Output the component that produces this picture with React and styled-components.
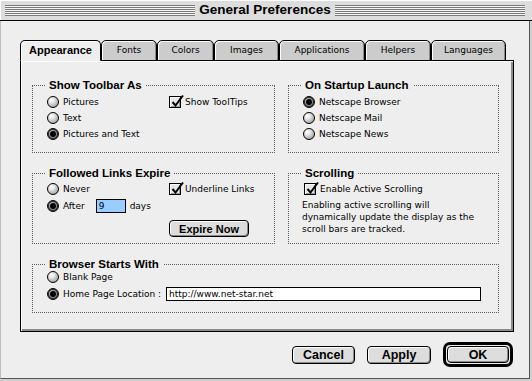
import React from "react";
import styled, { createGlobalStyle, css } from "styled-components";

const GlobalStyle = createGlobalStyle`
  html, body { margin: 0; padding: 0; background: #ffffff; }
  * { box-sizing: border-box; }
`;

const Window = styled.div`
  width: 532px;
  height: 381px;
  display: flex;
  flex-direction: column;
  background: #cfcfcf;
  font-family: "DejaVu Sans", sans-serif;
  font-size: 9px;
  color: #000;
`;

const TitleBar = styled.div`
  flex: none;
  height: 21px;
  display: flex;
  align-items: center;
  gap: 4px;
  padding: 0 7px 0 5px;
  background: #dddddd;
  border-bottom: 1px solid #000;
  box-shadow: inset 1px 1px 0 #fff;
`;

const Stripes = styled.div`
  flex: 1;
  height: 11px;
  background: repeating-linear-gradient(to bottom, #7b7b7b 0 1px, #f4f4f4 1px 2px);
`;

const Title = styled.div`
  font-family: "Liberation Sans", Arial, sans-serif;
  font-weight: 700;
  font-size: 13.5px;
  line-height: 16px;
  white-space: nowrap;
`;

const Content = styled.div`
  flex: 1;
  margin: 0 2px 2px 0;
  background: #eeeeee;
  border-left: 1px solid #bdbdbd;
  border-right: 1px solid #555;
  border-bottom: 1px solid #555;
  padding: 19px 0 0 19px;
  display: flex;
  flex-direction: column;
`;

const TabRow = styled.div`
  display: flex;
  height: 21px;
  margin-bottom: -1px;
`;

const Tab = styled.div`
  position: relative;
  z-index: ${(p) => (p.$active ? 2 : 0)};
  width: ${(p) => p.$w}px;
  height: 21px;
  display: flex;
  align-items: center;
  justify-content: center;
  padding-bottom: 1px;
  border: 1px solid #000;
  border-bottom-color: ${(p) => (p.$active ? "#eeeeee" : "#000")};
  border-radius: 5px 5px 0 0;
  background: ${(p) => (p.$active ? "#eeeeee" : "#cccccc")};
  box-shadow: inset 1px 1px 0 #fff, inset -1px 0 0 #8a8a8a;
  white-space: nowrap;
  ${(p) =>
    p.$active &&
    css`
      font-family: "Liberation Sans", Arial, sans-serif;
      font-weight: 700;
      font-size: 11px;
      box-shadow: inset 1px 1px 0 #fff;
    `}
`;

const Panel = styled.div`
  width: 494px;
  height: 272px;
  border: 1px solid #000;
  background: #eeeeee;
  box-shadow: inset 1px 1px 0 #fff, inset -2px -2px 0 #8c8c8c;
  padding: 24px 0 0 11px;
  display: grid;
  grid-template-columns: 243px 211px;
  grid-template-rows: 68px 71px 49px;
  column-gap: 13px;
  row-gap: 20px;
  align-content: start;
`;

const Group = styled.div`
  position: relative;
  border: 1px dotted #5a5a5a;
  padding-top: ${(p) => p.$top}px;
  padding-left: ${(p) => p.$left || 14}px;
  grid-column: ${(p) => (p.$wide ? "1 / -1" : "auto")};
  display: flex;
`;

const GroupTitle = styled.div`
  position: absolute;
  top: -8px;
  left: 12px;
  padding: 0 4px;
  background: #eeeeee;
  font-family: "Liberation Sans", Arial, sans-serif;
  font-weight: 700;
  font-size: 11.5px;
  line-height: 14px;
  white-space: nowrap;
`;

const Stack = styled.div`
  display: flex;
  flex-direction: column;
  align-items: flex-start;
  gap: ${(p) => p.$gap || 0}px;
  width: ${(p) => (p.$w ? `${p.$w}px` : "auto")};
  flex: none;
`;

const Row = styled.div`
  display: flex;
  align-items: center;
  gap: 4px;
  height: 16px;
  white-space: nowrap;
  padding-left: ${(p) => p.$indent || 0}px;
`;

const RadioDot = styled.span`
  position: relative;
  flex: none;
  width: 12px;
  height: 12px;
  border-radius: 50%;
  border: 1px solid #000;
  background: radial-gradient(circle at 35% 30%, #ffffff 0, #ececec 25%, #aaaaaa 75%, #6c6c6c 100%);
  ${(p) =>
    p.$on &&
    css`
      box-shadow: inset 0 0 0 1px #222;
      background: radial-gradient(circle at 35% 30%, #cfcfcf, #5a5a5a);
      &::after {
        content: "";
        position: absolute;
        left: 2px;
        top: 2px;
        width: 6px;
        height: 6px;
        border-radius: 50%;
        background: #000;
      }
    `}
`;

const Box = styled.span`
  position: relative;
  flex: none;
  width: 12px;
  height: 12px;
  border: 1px solid #000;
  background: #e6e6e6;
  box-shadow: inset 1px 1px 0 #fff, inset -1px -1px 0 #9a9a9a;
`;

const Tick = styled.svg`
  position: absolute;
  left: 0;
  top: -3px;
  width: 14px;
  height: 14px;
  overflow: visible;
`;

const Field = styled.input`
  flex: none;
  width: ${(p) => p.$w}px;
  height: 14px;
  margin-left: ${(p) => p.$ml || 0}px;
  padding: 0 2px;
  border: 1px solid #000;
  border-radius: 0;
  outline: none;
  background: ${(p) => (p.$selected ? "#99ccff" : "#ffffff")};
  font-family: "DejaVu Sans", sans-serif;
  font-size: 9px;
  color: #000;
`;

const Label = styled.span`
  flex: none;
  width: ${(p) => (p.$w ? `${p.$w}px` : "auto")};
`;

const Note = styled.p`
  margin: 2px 0 0;
  line-height: 12px;
  white-space: nowrap;
`;

const Button = styled.button`
  flex: none;
  width: ${(p) => p.$w}px;
  height: ${(p) => p.$h || 18}px;
  margin-top: ${(p) => p.$mt || 0}px;
  padding: 0;
  border: 1px solid #000;
  border-radius: 4px;
  background: #dddddd;
  box-shadow: inset 1px 1px 0 #fff, inset -1px -1px 0 #8a8a8a;
  font-family: "Liberation Sans", Arial, sans-serif;
  font-weight: 700;
  font-size: ${(p) => p.$size || 12.5}px;
  color: #000;
`;

const DefaultRing = styled.span`
  display: inline-flex;
  padding: 1px;
  border: 3px solid #000;
  border-radius: 7px;
  background: #eeeeee;
`;

const Footer = styled.div`
  width: 494px;
  display: flex;
  justify-content: flex-end;
  align-items: center;
  gap: 12px;
  margin-top: 10px;
  padding-right: 1px;
`;

const Radio = ({ on, children }) => (
  <Row>
    <RadioDot $on={on} />
    <span>{children}</span>
  </Row>
);

const Checkbox = ({ children, indent }) => (
  <Row $indent={indent}>
    <Box>
      <Tick viewBox="0 0 14 14">
        <path d="M2.5 8 L5.5 11.5 L13 1.5" fill="none" stroke="#000" strokeWidth="2" />
      </Tick>
    </Box>
    <span>{children}</span>
  </Row>
);

const tabs = [
  ["Appearance", 81],
  ["Fonts", 56],
  ["Colors", 57],
  ["Images", 65],
  ["Applications", 86],
  ["Helpers", 66],
  ["Languages", 75],
];

export default function App() {
  return (
    <Window>
      <GlobalStyle />
      <TitleBar>
        <Stripes />
        <Title>General Preferences</Title>
        <Stripes />
      </TitleBar>
      <Content>
        <TabRow>
          {tabs.map(([name, w], i) => (
            <Tab key={name} $w={w} $active={i === 0}>
              {name}
            </Tab>
          ))}
        </TabRow>
        <Panel>
          <Group $top={8}>
            <GroupTitle>Show Toolbar As</GroupTitle>
            <Stack $w={122}>
              <Radio>Pictures</Radio>
              <Radio>Text</Radio>
              <Radio on>Pictures and Text</Radio>
            </Stack>
            <Stack>
              <Checkbox>Show ToolTips</Checkbox>
            </Stack>
          </Group>

          <Group $top={8}>
            <GroupTitle>On Startup Launch</GroupTitle>
            <Stack>
              <Radio on>Netscape Browser</Radio>
              <Radio>Netscape Mail</Radio>
              <Radio>Netscape News</Radio>
            </Stack>
          </Group>

          <Group $top={7}>
            <GroupTitle>Followed Links Expire</GroupTitle>
            <Stack $w={122} $gap={1}>
              <Radio>Never</Radio>
              <Row>
                <RadioDot $on />
                <span>After</span>
                <Field $w={30} $ml={7} $selected readOnly value="9" />
                <span>days</span>
              </Row>
            </Stack>
            <Stack>
              <Checkbox>Underline Links</Checkbox>
              <Button $w={80} $h={17} $mt={23} $size={11}>
                Expire Now
              </Button>
            </Stack>
          </Group>

          <Group $top={7} $left={13}>
            <GroupTitle>Scrolling</GroupTitle>
            <Stack>
              <Checkbox indent={2}>Enable Active Scrolling</Checkbox>
              <Note>
                Enabling active scrolling will
                <br />
                dynamically update the display as the
                <br />
                scroll bars are tracked.
              </Note>
            </Stack>
          </Group>

          <Group $top={4} $wide>
            <GroupTitle>Browser Starts With</GroupTitle>
            <Stack $gap={1}>
              <Radio>Blank Page</Radio>
              <Row>
                <RadioDot $on />
                <Label $w={99}>Home Page Location :</Label>
                <Field $w={315} readOnly value="http://www.net-star.net" />
              </Row>
            </Stack>
          </Group>
        </Panel>
        <Footer>
          <Button $w={63}>Cancel</Button>
          <Button $w={64}>Apply</Button>
          <DefaultRing>
            <Button $w={62} $h={17}>
              OK
            </Button>
          </DefaultRing>
        </Footer>
      </Content>
    </Window>
  );
}
